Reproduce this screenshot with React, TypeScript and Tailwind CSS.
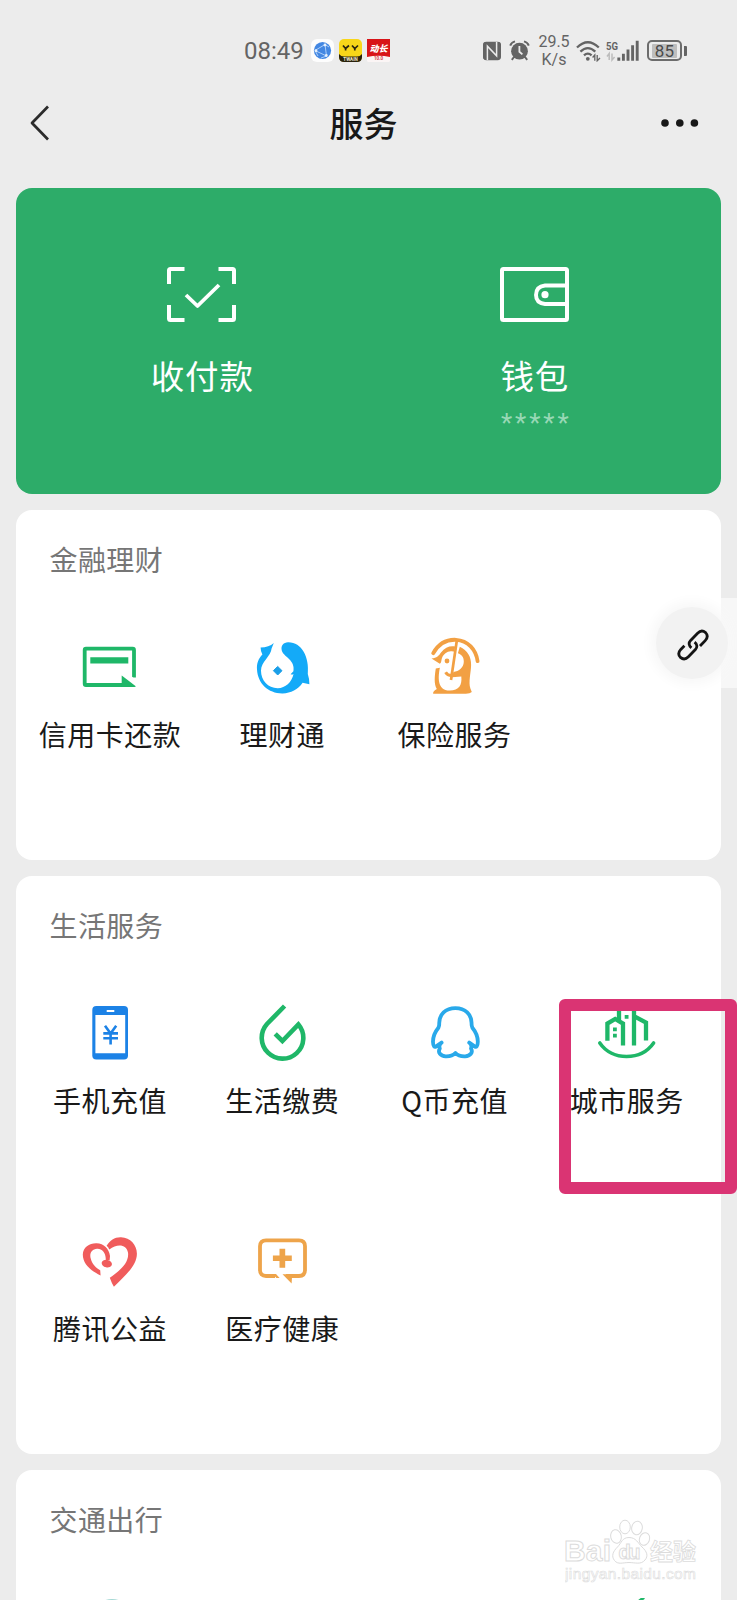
import React from "react";

interface ServiceItem {
  label: string;
  icon: React.ReactNode;
}

interface ServiceSectionProps {
  title: string;
  items: ServiceItem[];
  className?: string;
}

const ServiceIcon: React.FC<{ children: React.ReactNode }> = ({ children }) => (
  <svg viewBox="0 0 60 60" fill="none" className="w-[60px] h-[60px]">
    {children}
  </svg>
);

const financeItems: ServiceItem[] = [
  {
    label: "信用卡还款",
    icon: (
      <ServiceIcon>
        <path
          d="M54 40.5V13Q54 11.7 52.7 11.7H6Q4.7 11.7 4.7 13V46.7Q4.7 48 6 48H44"
          stroke="#1fb768"
          strokeWidth="3.8"
        />
        <path d="M10.3 20.3H48.3V26.5H10.3Z" fill="#1fb768" />
        <path d="M41.7 38.4L55.8 49.2Q55.5 49.9 54.5 49.9H41.7Z" fill="#1fb768" />
        <path d="M52 39.8L56 43V44.6L51 41Z" fill="#fff" />
      </ServiceIcon>
    ),
  },
  {
    label: "理财通",
    icon: (
      <ServiceIcon>
        <path
          d="M21.8 6Q17 10.4 8.6 10.6Q8.6 14.5 10.4 17.6C6.5 21.5 4.6 26.5 5 32.5C5.7 46.5 16.5 56.6 30.6 56.4C39 56.3 46 52.5 50.6 45.8Q54 46.8 57.4 47.2Q57.6 42.5 55.8 37C57.6 20 49.5 5 36 5.3C31.5 5.5 29 8.5 29.6 12.5C30 16.5 34 18.8 37 22C40.6 25.5 42.2 29 41.4 34.2L38.6 37.2Q40.5 38 41.6 37C39.5 45.5 33.5 51 25.8 51.2C16 51.3 9 43.5 9 33.8C9 24.5 19 19.5 19.6 11.5Z"
          fill="#14aaf8"
        />
        <path
          d="M25.7 29.4L30 33.7L25.7 38L21.4 33.7Z"
          fill="#1a9fe8"
          stroke="#1a9fe8"
          strokeLinejoin="round"
        />
      </ServiceIcon>
    ),
  },
  {
    label: "保险服务",
    icon: (
      <ServiceIcon>
        <path
          d="M8.2 16.2C14 6 23 2.4 31 2.8C43 3.5 51 12.5 52.6 24.2"
          stroke="#f2a043"
          strokeWidth="3.8"
          strokeLinecap="round"
        />
        <path
          d="M6.5 21.5C12 21 14 18.5 16 15.5C20 10.2 25.5 8.5 30.5 9.7L28.6 14.7C23.5 12.8 18.8 16.5 17.2 20.5C16 23.6 16.8 25.5 14.8 26.7Z"
          fill="#f2a043"
        />
        <path
          d="M34.8 9.7C42.5 13 46.3 20 46.1 28C46 35.5 43.2 45 45.4 51.5L46.8 55Q45 57 40 56.8H8.2Q7.4 54.7 11.8 52C8.8 47 9.6 39 10.8 31.5L14.9 30.8C13.2 39 11.6 53.6 24.8 53.6C34 53.6 37.2 48.2 36.3 39.6L27 40.2L28.4 35C34 34.2 38.7 30.4 38.8 24.7C38.9 20 36.5 17.3 32.9 16.2Z"
          fill="#f2a043"
        />
        <path d="M31.9 3L26 43" stroke="#f2a043" strokeWidth="2.7" />
        <path d="M20.6 35.2Q22.5 38.7 27 38.5" stroke="#f2a043" strokeWidth="3" />
        <circle cx="22" cy="24" r="2.4" fill="#f2a043" />
      </ServiceIcon>
    ),
  },
];

const lifeItems: ServiceItem[] = [
  {
    label: "手机充值",
    icon: (
      <ServiceIcon>
        <rect x="12.3" y="3" width="35.7" height="53.4" rx="4" fill="#1c82e6" />
        <path d="M15.4 12H45.2V50.2H15.4Z" fill="#fff" />
        <path d="M26.7 8H34.3" stroke="#fff" strokeWidth="2" />
        <path
          d="M25 22.8L30.6 30.5L36.2 22.8M23.3 30.4H38M23.3 35.2H38M30.6 30V41.5"
          stroke="#1c82e6"
          strokeWidth="2.6"
        />
      </ServiceIcon>
    ),
  },
  {
    label: "生活缴费",
    icon: (
      <ServiceIcon>
        <path
          d="M32.6 3L15 21A20.8 20.8 0 1 0 46.4 21.4L30.4 38L23.2 30.8"
          stroke="#1fb768"
          strokeWidth="4.6"
        />
      </ServiceIcon>
    ),
  },
  {
    label: "Q币充值",
    icon: (
      <ServiceIcon>
        <path
          d="M30.4 5.2C20.5 5.2 14.2 11.5 14.2 20.2Q14.4 22.5 13.4 24.8C10 29 7.9 34 8 39C8.1 43.6 9.5 44.6 11.2 43.4L16.6 39.6C14.4 41.4 14 43.6 14.8 45.4C12.4 49.4 15.6 53.1 20.6 53.3C25 53.5 28.5 52 30.4 50C32.3 52 35.8 53.5 40.2 53.3C45.2 53.1 48.4 49.4 46 45.4C46.8 43.6 46.4 41.4 44.2 39.6L49.6 43.4C51.3 44.6 52.7 43.6 52.8 39C52.9 34 50.8 29 47.4 24.8Q46.4 22.5 46.6 20.2C46.6 11.5 40.3 5.2 30.4 5.2Z"
          stroke="#29a9ea"
          strokeWidth="3.8"
          strokeLinejoin="round"
        />
      </ServiceIcon>
    ),
  },
  {
    label: "城市服务",
    icon: (
      <ServiceIcon>
        <path
          d="M10.4 37.8V20.6L18.2 16L26 20.6V42.6M22 17V5.5L29.4 3L37 6V42.4M37 13.2L49 19.6V37.6"
          stroke="#1fb768"
          strokeWidth="4.3"
        />
        <path
          d="M2.8 40C15 58 44 58 56.6 40"
          stroke="#1fb768"
          strokeWidth="3.6"
          strokeLinecap="round"
        />
        <path
          d="M27.7 12H31.5V15.8H27.7ZM16 24.4H19.8V28.2H16ZM16 30.8H19.8V34.6H16Z"
          fill="#1fb768"
        />
      </ServiceIcon>
    ),
  },
  {
    label: "腾讯公益",
    icon: (
      <ServiceIcon>
        <path
          d="M20.6 44.4C10 39.5 2.8 32.5 2.8 23.5C3 16 9.5 12 16.5 12.2C24 12.5 29 17.5 30 25L29.6 29.5Q27.8 28.8 25.8 29C26 21 21.5 17.4 17 17.8C12 18.2 9.4 22 10.6 27C12 33 16 37.2 20.2 39.2Z"
          fill="#f05c5c"
        />
        <path
          d="M26.6 14.8C30 9.4 35 6 41 6.3C50.5 6.8 56.8 14 56.9 22.5C57 35 44 45.5 33.9 55.8Q31.6 52 29.8 46.8C39 40.5 49.5 32 48 21.5C46.5 13.5 37.5 12 29.3 18.6Q28.3 16 26.6 14.8Z"
          fill="#f05c5c"
        />
        <ellipse cx="26.8" cy="32.6" rx="5.2" ry="3.7" transform="rotate(12 26.8 32.6)" fill="#f05c5c" />
      </ServiceIcon>
    ),
  },
  {
    label: "医疗健康",
    icon: (
      <ServiceIcon>
        <path
          d="M23 45H14Q8 45 8 39V15.3Q8 9.3 14 9.3H47Q53 9.3 53 15.3V39Q53 45 47 45H34"
          stroke="#eea44a"
          strokeWidth="3.8"
        />
        <path
          d="M27.5 17.8H33.2V24.4H39.8V30.1H33.2V36.7H27.5V30.1H20.9V24.4H27.5Z"
          fill="#eea44a"
        />
        <path d="M20.7 43H24L27.6 47H24.4ZM30.5 43.2H40.2L39.6 52.6Z" fill="#eea44a" />
      </ServiceIcon>
    ),
  },
];

const ServiceSection: React.FC<ServiceSectionProps> = ({
  title,
  items,
  className = "",
}) => (
  <section className={`bg-white rounded-2xl px-2 pt-[27px] ${className}`}>
    <h2 className="pl-[25.5px] text-[28px] leading-[44px] tracking-[0.4px] text-[#767676]">
      {title}
    </h2>
    <div className="grid grid-cols-4 gap-y-[111px] pt-14">
      {items.map((item) => (
        <div key={item.label} className="flex flex-col items-center">
          {item.icon}
          <span className="mt-[17px] text-[28px] leading-10 tracking-[0.5px] whitespace-nowrap text-[#191919]">
            {item.label}
          </span>
        </div>
      ))}
    </div>
  </section>
);

const StatusBar: React.FC = () => (
  <div className="flex items-center h-[100px] pl-[244px] pt-px font-[Roboto,sans-serif] text-[#646464]">
    <span className="w-[62px] pt-px text-[24px] leading-none">08:49</span>
    <div className="flex gap-[5px] ml-[5px]">
      <svg viewBox="0 0 23 23" className="w-[23px] h-[23px]">
        <rect width="23" height="23" rx="6" fill="#fdfdfd" />
        <circle cx="11.5" cy="11.5" r="8.6" fill="#4387e2" />
        <path
          d="M4 11.5L14 5.5L15.5 17L4 11.5M14 5.5L18 8M15.5 17L10 19M4 11.5L7 17"
          fill="none"
          stroke="#b9d7fb"
          strokeWidth="0.9"
        />
        <circle cx="14" cy="6" r="1.4" fill="#e5f0fd" />
        <circle cx="5" cy="11.7" r="1.4" fill="#e5f0fd" />
        <circle cx="15.3" cy="16.5" r="1.4" fill="#e5f0fd" />
      </svg>
      <svg viewBox="0 0 23 23" className="w-[23px] h-[23px]">
        <rect width="23" height="23" rx="5" fill="#f8d619" />
        <path
          d="M4 6.5L6.6 9.5L10 6.5M6.6 9.5V11.5M13 6.5L15.8 9.5L19 6.5M15.8 9.5V11.5"
          fill="none"
          stroke="#2a2410"
          strokeWidth="1.7"
        />
        <path d="M0 15Q2 17.5 5 17.5H18Q21 17.5 23 15V18Q23 23 18 23H5Q0 23 0 18Z" fill="#29210c" />
        <text x="11.5" y="22" fontSize="4.6" fontWeight="700" textAnchor="middle" fill="#efe9d0">
          TWAIN
        </text>
      </svg>
      <svg viewBox="0 0 23 23" className="w-[23px] h-[23px]">
        <rect width="23" height="23" rx="1.5" fill="#fbf5f5" />
        <path d="M0 0H23V18Q11.5 15.5 0 18Z" fill="#d81418" />
        <text
          x="11.5"
          y="12.6"
          fontSize="9"
          fontWeight="900"
          fontStyle="italic"
          textAnchor="middle"
          fill="#fff"
          className="font-['Noto_Sans_CJK_SC',sans-serif]"
        >
          动长
        </text>
        <text x="11.5" y="21.4" fontSize="4.6" fontWeight="700" textAnchor="middle" fill="#d8474a">
          10.0
        </text>
      </svg>
    </div>
    <svg viewBox="0 0 20 20" className="w-5 h-5 ml-[92px]" fill="none">
      <path d="M4.5 1H13L14.5 3.2M15 1H16.5Q18.8 1 18.8 3.5V14.5Q18.8 17.5 16.5 18.6M15.5 18.8H7L5.4 16.6M4.5 18.8H4Q1.2 18.8 1.2 16V4Q1.2 1 4 1" fill="#646464" />
      <rect x="1" y="0.8" width="18" height="18.4" rx="3.4" fill="#646464" />
      <path d="M5.4 19V5.2L14.6 14.8V1" stroke="#ebebeb" strokeWidth="1.5" />
    </svg>
    <svg viewBox="0 0 21 21" className="w-[21px] h-[21px] ml-[7px]" fill="none">
      <circle cx="10.5" cy="11.2" r="8.4" fill="#646464" />
      <path d="M1.2 5.6Q2.5 2.4 6 1.4M19.8 5.6Q18.5 2.4 15 1.4M5 17L2.8 19.8M16 17L18.2 19.8" stroke="#646464" strokeWidth="2" />
      <path d="M10.4 6V11.8L13.4 14.4" stroke="#ebebeb" strokeWidth="1.8" />
    </svg>
    <div className="flex flex-col items-center w-[32px] ml-2 text-[16px] leading-[18px]">
      <span>29.5</span>
      <span>K/s</span>
    </div>
    <svg viewBox="0 0 26 22" className="w-[26px] h-[22px] ml-[6px]" fill="none">
      <path
        d="M1 7.5Q11.8 -3 22.8 7.5M4.4 11.6Q11.8 4.6 19.3 11.6M8 15.4Q11.8 11.8 15.6 15.4"
        stroke="#646464"
        strokeWidth="2.3"
      />
      <circle cx="11.8" cy="18.8" r="1.9" fill="#646464" />
      <path d="M16.6 17.5L18.8 15V20.8M21.2 15V20.8L24 18" stroke="#646464" strokeWidth="1.3" />
    </svg>
    <svg viewBox="0 0 34 22" className="w-[34px] h-[22px] ml-[4px]" fill="none">
      <text x="0" y="9.6" fontSize="11.5" fontWeight="700" textLength="12" lengthAdjust="spacingAndGlyphs" fill="#646464">
        5G
      </text>
      <path d="M1 16.5L3.2 13.5V20M6 13.5V20L8.6 17" stroke="#bcbcbc" strokeWidth="1.5" />
      <path d="M12.8 17.5V20.8M17.4 13.8V20.8M22 9.6V20.8M26.6 5.2V20.8M31.2 0.8V20.8" stroke="#646464" strokeWidth="2.9" />
    </svg>
    <div className="flex items-center ml-[7px]">
      <div className="flex items-center justify-center w-[35px] h-[21px] rounded-[5px] border-2 border-[#6c6c6c]">
        <span className="w-[25px] h-[14px] bg-[#bebebe] rounded-[1px] text-center text-[17px] leading-[14px] tracking-[0.3px] text-[#4a4a4a]">
          85
        </span>
      </div>
      <div className="w-[3px] h-[10px] ml-[2px] bg-[#646464] rounded-r-[1px]" />
    </div>
  </div>
);

const NavBar: React.FC = () => (
  <header className="flex items-center justify-between h-[88px] pl-[30px] pr-[38px] pb-[42px]">
    <svg viewBox="0 0 20 36" fill="none" className="w-5 h-9">
      <path d="M18 1.5L2 18L18 34.5" stroke="#2b2b2b" strokeWidth="2.7" strokeLinejoin="round" />
    </svg>
    <h1 className="pl-4 text-[34px] leading-[46px] font-medium text-[#181818]">服务</h1>
    <svg viewBox="0 0 38 8" className="w-[38px] h-2" fill="#181818">
      <circle cx="4" cy="4" r="3.8" />
      <circle cx="18.8" cy="4" r="3.8" />
      <circle cx="33.4" cy="4" r="3.8" />
    </svg>
  </header>
);

const PaymentCard: React.FC = () => (
  <section className="flex h-[306px] px-5 pt-[79px] bg-[#2dac69] rounded-2xl text-white">
    <div className="flex flex-col items-center flex-1">
      <svg viewBox="0 0 69 55" fill="none" className="w-[69px] h-[55px] mr-px">
        <path
          d="M2 17V3.5Q2 2 3.5 2H17.5M51.5 2H65.5Q67 2 67 3.5V17M67 38V51.5Q67 53 65.5 53H51.5M17.5 53H3.5Q2 53 2 51.5V38"
          stroke="currentColor"
          strokeWidth="4"
        />
        <path
          d="M19 28L30.5 39L52 18"
          stroke="currentColor"
          strokeWidth="3.8"
          strokeLinejoin="round"
        />
      </svg>
      <span className="mt-[31px] text-[33.5px] leading-[44px] tracking-[0.8px]">收付款</span>
    </div>
    <div className="flex flex-col items-center flex-1">
      <svg viewBox="0 0 69 55" fill="none" className="w-[69px] h-[55px]">
        <rect x="2" y="2" width="65" height="51" rx="1.5" stroke="currentColor" strokeWidth="4" />
        <path d="M67 18.5H45Q36 19.5 36 28Q36 36 45 37H67" stroke="currentColor" strokeWidth="3.9" />
        <circle cx="45" cy="27.7" r="3.6" fill="currentColor" />
      </svg>
      <span className="mt-[31px] text-[33.5px] leading-[44px] tracking-[0.8px]">钱包</span>
      <span className="mt-2 pl-[3px] text-[26px] leading-9 tracking-[2.9px] text-[#98d8b5] font-[Roboto,sans-serif]">
        *****
      </span>
    </div>
  </section>
);

const FloatingLink: React.FC = () => (
  <div className="absolute top-[598px] right-0 w-[91px] h-[90px]">
    <div className="absolute top-0 right-0 w-4 h-full bg-[#f7f7f7]" />
    <div className="absolute top-[9px] left-[10px] flex items-center justify-center w-[72px] h-[72px] rounded-full bg-[#f2f2f2] shadow-[0_0_12px_6px_#f8f8f8]">
      <svg
        viewBox="0 0 32 32"
        fill="none"
        className="w-8 h-8 ml-[2px] mt-1"
        stroke="#141414"
        strokeWidth="2.8"
      >
        <path d="M14.4 18.8C12 17 11.2 14 13.6 11.4L20.6 4.2C23 1.8 26.2 1.6 28.6 3.6C30.8 6 30.6 9 28.2 11.6L23 17" />
        <path d="M17.6 13.2C20 15 20.8 18 18.4 20.6L11.4 27.8C9 30.2 5.8 30.4 3.4 28.4C1.2 26 1.4 23 3.8 20.4L7.4 16.8" />
      </svg>
    </div>
  </div>
);

const Watermark: React.FC = () => (
  <div className="absolute top-[1518px] left-[565px] w-[134px] h-[68px]">
    <svg viewBox="0 0 134 68" className="w-[134px] h-[68px]" fill="#fff" stroke="#dcdcdc" strokeWidth="1">
      <text x="-1" y="43" fontSize="30" fontWeight="700" textLength="47" className="font-['Liberation_Sans',sans-serif]">
        Bai
      </text>
      <ellipse cx="51" cy="18.5" rx="5.3" ry="6.8" transform="rotate(-12 51 18.5)" />
      <ellipse cx="60" cy="9" rx="5.3" ry="6.8" />
      <ellipse cx="72" cy="10" rx="5.3" ry="6.8" transform="rotate(10 72 10)" />
      <ellipse cx="79.5" cy="21" rx="5" ry="6.4" transform="rotate(20 79.5 21)" />
      <path d="M64 19.5C71 19.5 73 25 77 29C82 33.5 83.5 38 80 42C76 47 70 44.5 64 44.5C58 44.5 53 47 49.5 42.5C46 38 48 33.5 52.5 29C56.5 25 57 19.5 64 19.5Z" />
      <text x="53.5" y="41" fontSize="20" fontWeight="700" textLength="22" className="font-['Liberation_Sans',sans-serif]">
        du
      </text>
      <text x="85" y="42" fontSize="23" fontWeight="700" strokeWidth="0.8" className="font-['Noto_Sans_CJK_SC',sans-serif]">
        经验
      </text>
      <text x="0" y="61" fontSize="15.5" textLength="131" strokeWidth="0.6" className="font-['Liberation_Sans',sans-serif]">
        jingyan.baidu.com
      </text>
    </svg>
  </div>
);

const App: React.FC = () => {
  return (
    <div className="relative w-[737px] h-[1600px] overflow-hidden bg-[#ececec] font-['Noto_Sans_CJK_SC',sans-serif]">
      <StatusBar />
      <NavBar />
      <main className="flex flex-col gap-4 px-4">
        <PaymentCard />
        <ServiceSection title="金融理财" items={financeItems} className="h-[350px]" />
        <ServiceSection title="生活服务" items={lifeItems} className="h-[578px]" />
        <section className="h-[200px] bg-white rounded-2xl pt-[27px] pl-[33.5px]">
          <h2 className="text-[28px] leading-[44px] tracking-[0.4px] text-[#767676]">交通出行</h2>
          {/* tops of the next row of icons */}
          <div className="flex pt-[57px]">
            <svg viewBox="0 0 60 10" className="w-[60px] h-[10px] ml-[31px]" fill="none">
              <path d="M22 4Q31 0 40 4" stroke="#a5d8d4" strokeWidth="2" />
            </svg>
            <svg viewBox="0 0 20 10" className="w-5 h-[10px] ml-[490px]" fill="none">
              <path d="M7 4L13 -0.5" stroke="#1fb768" strokeWidth="3" />
            </svg>
          </div>
        </section>
      </main>
      <FloatingLink />
      <div className="absolute top-[999px] left-[559px] w-[178px] h-[195px] border-[12px] border-[#da3473] rounded-md" />
      <Watermark />
    </div>
  );
};

export default App;
